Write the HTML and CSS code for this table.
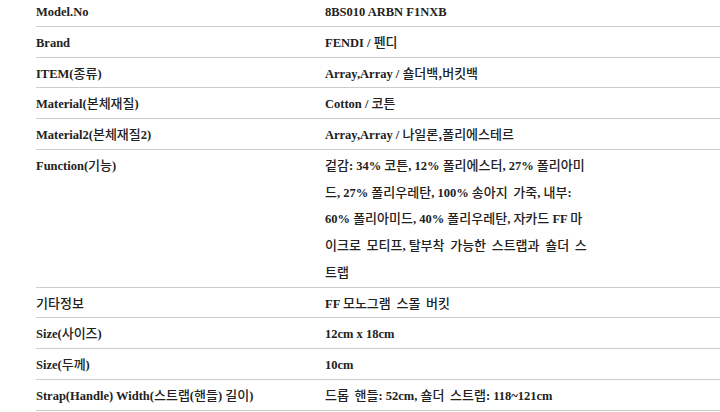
FILE: index.html
```html
<!DOCTYPE html>
<html lang="ko">
<head>
<meta charset="utf-8">
<link rel="stylesheet" href="styles.css">
</head>
<body>
<div class="spec">
  <div class="row"><div class="key">Model.No</div><div class="val">8BS010 ARBN F1NXB</div></div>
  <div class="row"><div class="key">Brand</div><div class="val">FENDI / <span class="ko">펜디</span></div></div>
  <div class="row"><div class="key">ITEM(<span class="ko">종류</span>)</div><div class="val">Array,Array / <span class="ko">숄더백,버킷백</span></div></div>
  <div class="row"><div class="key">Material(<span class="ko">본체재질</span>)</div><div class="val">Cotton / <span class="ko">코튼</span></div></div>
  <div class="row"><div class="key">Material2(<span class="ko">본체재질</span>2)</div><div class="val">Array,Array / <span class="ko">나일론,폴리에스테르</span></div></div>
  <div class="row"><div class="key">Function(<span class="ko">기능</span>)</div><div class="val"><p class="wrap"><span class="ko">겉감</span>: 34% <span class="ko">코튼</span>, 12% <span class="ko">폴리에스터</span>, 27% <span class="ko">폴리아미드</span>, 27% <span class="ko">폴리우레탄</span>, 100% <span class="ko">송아지 가죽</span>, <span class="ko">내부</span>: 60% <span class="ko">폴리아미드</span>, 40% <span class="ko">폴리우레탄</span>, <span class="ko">자카드</span> FF <span class="ko">마이크로 모티프</span>, <span class="ko">탈부착 가능한 스트랩과 숄더 스트랩</span></p></div></div>
  <div class="row"><div class="key"><span class="ko">기타정보</span></div><div class="val">FF <span class="ko">모노그램 스몰 버킷</span></div></div>
  <div class="row"><div class="key">Size(<span class="ko">사이즈</span>)</div><div class="val">12cm x 18cm</div></div>
  <div class="row"><div class="key">Size(<span class="ko">두께</span>)</div><div class="val">10cm</div></div>
  <div class="row"><div class="key">Strap(Handle) Width(<span class="ko">스트랩</span>(<span class="ko">핸들</span>) <span class="ko">길이</span>)</div><div class="val"><span class="ko">드롭 핸들</span>: 52cm, <span class="ko">숄더 스트랩</span>: 118~121cm</div></div>
</div>
</body>
</html>
```
FILE: styles.css
```css
html, body {
  margin: 0;
  padding: 0;
  background: #fff;
}
body {
  padding-left: 36px;
  overflow: hidden;
}
.spec {
  margin-top: -4px;
  font-family: "Liberation Serif", "Noto Sans CJK KR", serif;
  font-weight: bold;
  font-size: 12.5px;
  line-height: 26.75px;
  color: #222;
}
.row {
  display: grid;
  grid-template-columns: 289px 1fr;
  padding: 3px 0 0;
  border-bottom: 1px solid #cdcdcd;
}
.ko {
  font-family: "Noto Sans CJK KR", sans-serif;
  font-weight: 500;
  font-size: 13px;
  line-height: 1;
  word-spacing: 2px;
}
.wrap {
  margin: 0;
  width: 268px;
}
```
